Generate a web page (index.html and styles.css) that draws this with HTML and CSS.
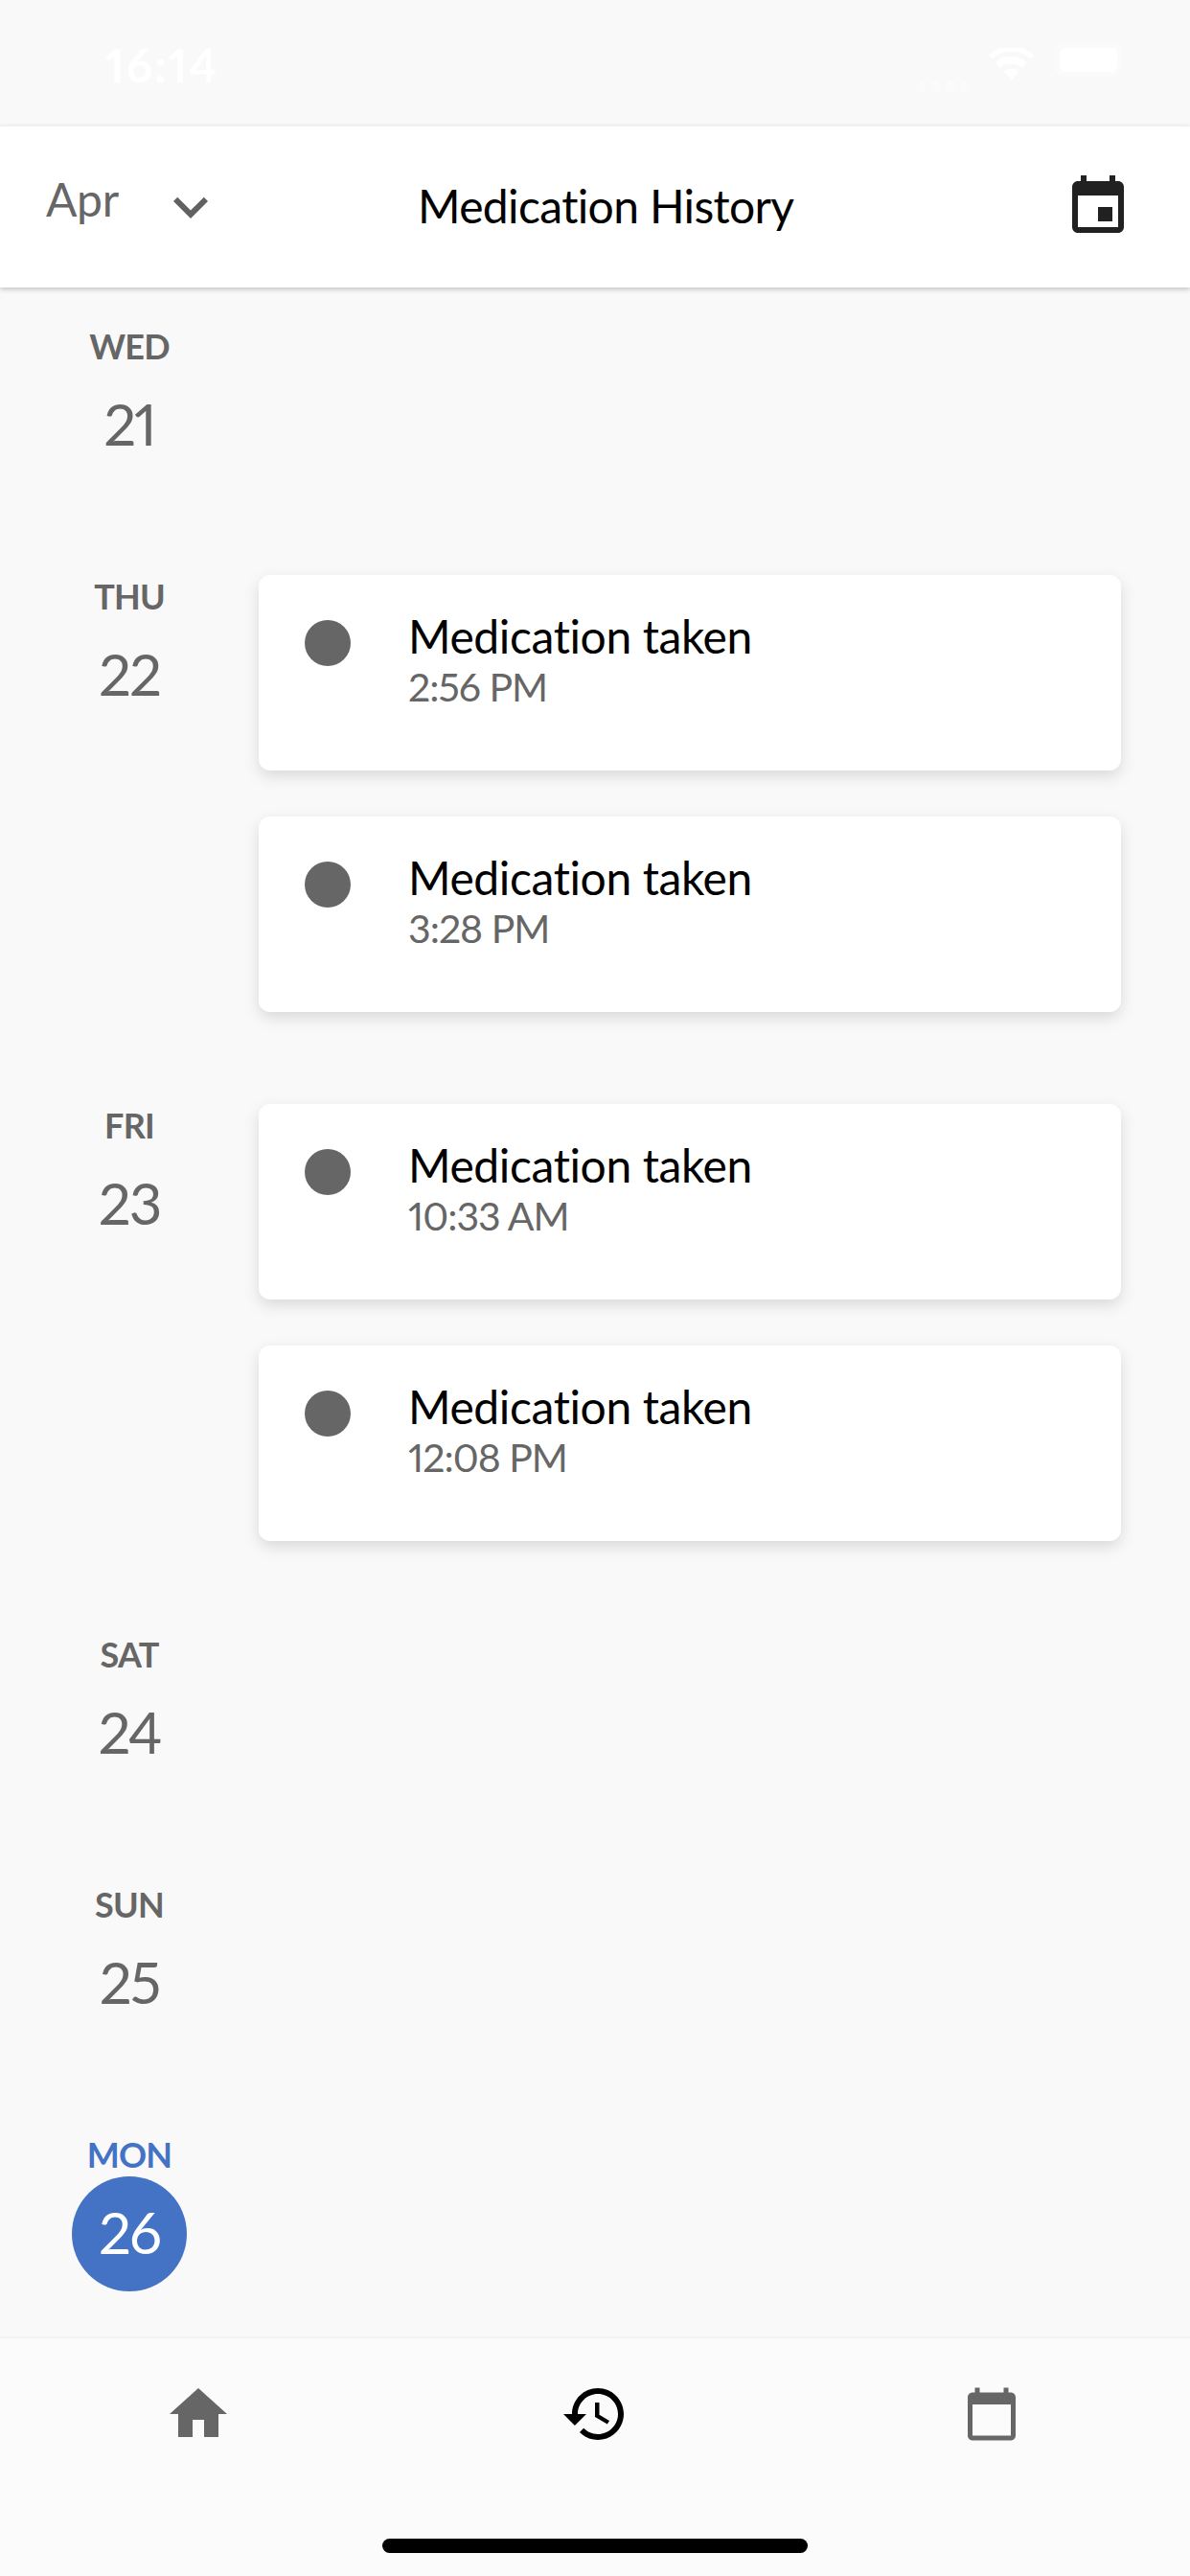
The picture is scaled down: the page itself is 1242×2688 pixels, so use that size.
FILE: index.html
```html
<!DOCTYPE html>
<html lang="en">
<head>
<meta charset="utf-8">
<title>Medication History</title>
<link rel="stylesheet" href="styles.css">
</head>
<body>
<div class="app">
  <div class="status">
    <span class="clock">16:14</span>
    <span class="status-right">
      <span class="signal"><i></i><i></i><i></i><i></i></span>
      <svg class="wifi" viewBox="0 0 48 34"><path d="M24 34 16 25a12 12 0 0 1 16 0zM12 21 7 15a26 26 0 0 1 34 0l-5 6a18 18 0 0 0-24 0zM3.500 11 0 7a36 36 0 0 1 48 0l-3.500 4a31 31 0 0 0-41 0z"/></svg>
      <span class="battery"><span class="battery-fill"></span></span>
    </span>
  </div>
  <header class="header">
    <span class="month">Apr</span>
    <svg class="chevron" viewBox="0 0 24 24"><path d="M7.410 8.590 12 13.170l4.590-4.580L18 10l-6 6-6-6z"/></svg>
    <h1 class="title">Medication History</h1>
    <svg class="event" viewBox="0 0 24 24"><path d="M17 12h-5v5h5v-5zM16 1v2H8V1H6v2H5c-1.110 0-1.990.9-1.990 2L3 19c0 1.100.89 2 2 2h14c1.100 0 2-.9 2-2V5c0-1.100-.9-2-2-2h-1V1h-2zm3 18H5V8h14v11z"/></svg>
  </header>
  <main class="list">
    <section class="day">
      <div class="date"><span class="dow">WED</span><span class="num">21</span></div>
    </section>
    <section class="day">
      <div class="date"><span class="dow">THU</span><span class="num">22</span></div>
      <div class="cards">
        <article class="card"><span class="dot"></span><div><div class="card-title">Medication taken</div><div class="card-time">2:56 PM</div></div></article>
        <article class="card"><span class="dot"></span><div><div class="card-title">Medication taken</div><div class="card-time">3:28 PM</div></div></article>
      </div>
    </section>
    <section class="day">
      <div class="date"><span class="dow">FRI</span><span class="num">23</span></div>
      <div class="cards">
        <article class="card"><span class="dot"></span><div><div class="card-title">Medication taken</div><div class="card-time">10:33 AM</div></div></article>
        <article class="card"><span class="dot"></span><div><div class="card-title">Medication taken</div><div class="card-time">12:08 PM</div></div></article>
      </div>
    </section>
    <section class="day">
      <div class="date"><span class="dow">SAT</span><span class="num">24</span></div>
    </section>
    <section class="day">
      <div class="date"><span class="dow">SUN</span><span class="num">25</span></div>
    </section>
    <section class="day today">
      <div class="date"><span class="dow">MON</span><span class="num">26</span></div>
    </section>
  </main>
  <nav class="tabs">
    <div class="tab-row">
      <svg class="tab-icon grey" viewBox="0 0 24 24"><path d="M10 20v-6h4v6h5v-8h3L12 3 2 12h3v8z"/></svg>
      <svg class="tab-icon" viewBox="0 0 24 24"><path d="M13 3c-4.970 0-9 4.030-9 9H1l3.890 3.890.07.14L9 12H6c0-3.870 3.130-7 7-7s7 3.130 7 7-3.130 7-7 7c-1.930 0-3.680-.79-4.940-2.060l-1.420 1.420C8.270 19.990 10.510 21 13 21c4.970 0 9-4.030 9-9s-4.030-9-9-9zm-1 5v5l4.280 2.540.72-1.210-3.500-2.080V8H12z"/></svg>
      <svg class="tab-icon grey cal" viewBox="0 0 24 24"><path d="M20 3h-1V1h-2v2H7V1H5v2H4c-1.100 0-2 .9-2 2v16c0 1.100.9 2 2 2h16c1.100 0 2-.9 2-2V5c0-1.100-.9-2-2-2zm0 18H4V8h16v13z"/></svg>
    </div>
    <div class="home-bar"></div>
  </nav>
</div>
</body>
</html>
```
FILE: styles.css
```css
* { box-sizing: border-box; }
html, body { margin: 0; padding: 0; }
body { width: 1242px; height: 2688px; background: #f9f9f9; font-family: "Lato", "Roboto", sans-serif; font-variant-ligatures: none; font-variant-numeric: proportional-nums; overflow: hidden; }
.app { width: 1242px; height: 2688px; display: flex; flex-direction: column; background: #f9f9f9; }

.status { height: 131px; display: flex; justify-content: space-between; padding: 44px 72px 0 110px; color: #fff; flex: none; }
.clock { font-size: 48px; line-height: 48px; font-weight: 700; letter-spacing: 2px; }
.status-right { display: flex; align-items: flex-start; padding-top: 0; }
.signal { display: flex; gap: 4px; margin: 41px 20px 0 0; }
.signal i { width: 11px; height: 11px; border-radius: 50%; background: #fbfbfb; }
.wifi { width: 47px; height: 34px; margin-top: 6px; fill: #fff; }
.battery { width: 70px; height: 36px; margin: 0 0 0 21px; padding: 5px; background: #f9f9f9; border: 1px solid #fbfbfb; border-radius: 10px; box-shadow: inset 0 0 0 4px #fbfbfb; }
.battery-fill { display: block; width: 60px; height: 25px; background: #fff; border-radius: 5px; }

.header { height: 169px; flex: none; background: #fff; border-top: 1px solid #f1f1f1; box-shadow: 0 2px 5px rgba(0,0,0,.22); display: flex; align-items: center; padding: 0 60px 0 48px; position: relative; z-index: 1; }
.month { font-size: 48px; color: #666; margin-bottom: 18px; width: 115px; letter-spacing: -.3px; }
.chevron { width: 72px; height: 72px; fill: #616161; flex: none; }
.title { font-size: 48px; font-weight: 400; color: #000; margin: 0 0 3px 201px; white-space: nowrap; letter-spacing: -.65px; }
.event { width: 72px; height: 72px; fill: #212121; margin-left: auto; flex: none; }

.list { flex: 1; padding-top: 39px; overflow: hidden; }
.day { display: flex; margin-bottom: 96px; min-height: 165px; padding-right: 72px; }
.date { width: 270px; flex: none; display: flex; flex-direction: column; align-items: center; color: #666; }
.dow { font-size: 36px; line-height: 45px; height: 45px; font-weight: 700; letter-spacing: -.8px; }
.num { font-size: 60px; width: 120px; height: 120px; line-height: 117px; text-align: center; border-radius: 50%; letter-spacing: -2px; }
.today .dow { color: #4472c4; }
.today .num { background: #4472c4; color: #fff; }

.cards { flex: 1; display: flex; flex-direction: column; gap: 48px; }
.card { height: 204px; background: #fff; border-radius: 12px; box-shadow: 0 6px 16px rgba(0,0,0,.13); display: flex; padding: 36px 48px 0; gap: 60px; }
.dot { width: 48px; height: 48px; margin-top: 11px; border-radius: 50%; background: #666; flex: none; }
.card-title { font-size: 48px; line-height: 56px; color: #000; letter-spacing: -.4px; }
.card-time { font-size: 41px; line-height: 50px; color: #666; letter-spacing: -1px; }

.tabs { height: 250px; flex: none; background: #fbfbfb; border-top: 2px solid #f4f4f4; display: flex; flex-direction: column; align-items: center; }
.tab-row { display: flex; width: 100%; height: 209px; padding: 43px 0 0 171px; }
.tab-icon { width: 72px; height: 72px; fill: #000; flex: none; }
.tab-icon.grey { fill: #666; }
.tab-row .tab-icon:nth-child(2) { margin-left: 342px; }
.tab-icon.cal { width: 60px; height: 60px; margin: 6px 0 0 348px; }
.home-bar { width: 444px; height: 15px; border-radius: 8px; background: #000; }
```
